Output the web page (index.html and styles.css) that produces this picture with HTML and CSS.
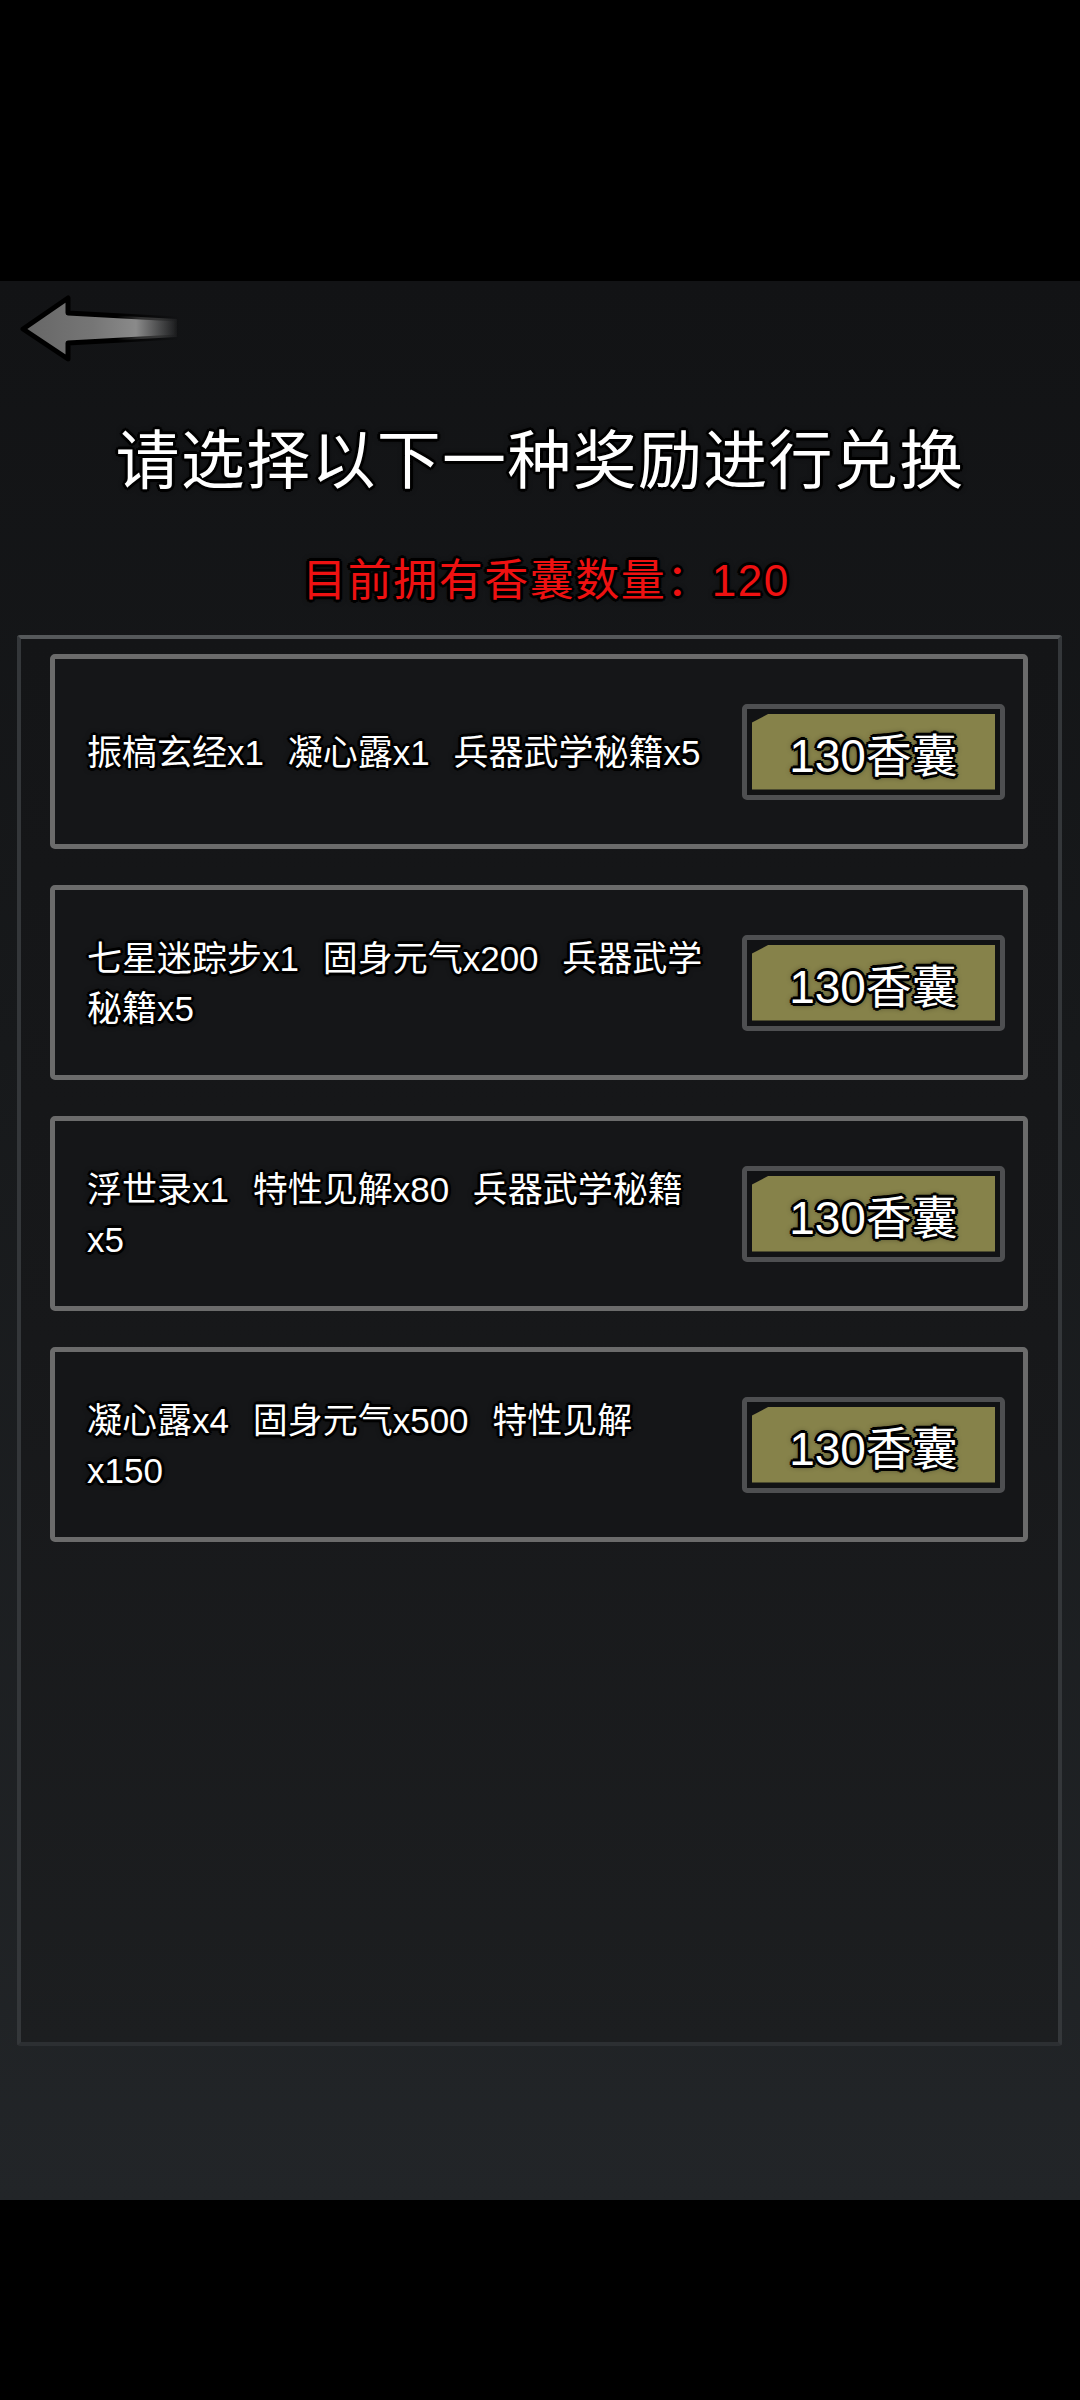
FILE: index.html
```html
<!DOCTYPE html>
<html lang="zh-CN">
<head>
  <meta charset="UTF-8">
  <meta name="viewport" content="width=device-width, initial-scale=1">
  <title>香囊兑换</title>
  <link rel="stylesheet" href="styles.css">
</head>
<body>

  <div class="status-bar"></div>

  <main class="screen">
    <div class="top">
      <button class="back" aria-label="返回">
        <svg width="180" height="90" viewBox="0 0 180 90">
          <defs>
            <linearGradient id="arrowFill" gradientUnits="userSpaceOnUse" x1="13" y1="0" x2="170" y2="0">
              <stop offset="0" stop-color="#666666"/>
              <stop offset="0.45" stop-color="#767676"/>
              <stop offset="0.72" stop-color="#8a8a8a"/>
              <stop offset="1" stop-color="#8a8a8a" stop-opacity="0"/>
            </linearGradient>
            <linearGradient id="arrowEdge" gradientUnits="userSpaceOnUse" x1="13" y1="0" x2="170" y2="0">
              <stop offset="0" stop-color="#000"/>
              <stop offset="0.6" stop-color="#000"/>
              <stop offset="1" stop-color="#000" stop-opacity="0"/>
            </linearGradient>
          </defs>
          <path d="M13 44 L58 13 L58 28 L167 34 L167 52 L58 58 L58 74 Z"
                fill="url(#arrowFill)" stroke="url(#arrowEdge)" stroke-width="5" stroke-linejoin="round"/>
        </svg>
      </button>
    </div>

    <h1 class="title">请选择以下一种奖励进行兑换</h1>
    <p class="owned">目前拥有香囊数量：120</p>

    <section class="panel">
      <div class="reward">
        <p class="reward-text">振槁玄经x1 凝心露x1 兵器武学秘籍x5</p>
        <button class="redeem"><span class="redeem-face">130香囊</span></button>
      </div>
      <div class="reward">
        <p class="reward-text">七星迷踪步x1 固身元气x200 兵器武学<br>秘籍x5</p>
        <button class="redeem"><span class="redeem-face">130香囊</span></button>
      </div>
      <div class="reward">
        <p class="reward-text">浮世录x1 特性见解x80 兵器武学秘籍<br>x5</p>
        <button class="redeem"><span class="redeem-face">130香囊</span></button>
      </div>
      <div class="reward">
        <p class="reward-text">凝心露x4 固身元气x500 特性见解<br>x150</p>
        <button class="redeem"><span class="redeem-face">130香囊</span></button>
      </div>
    </section>
  </main>

  <div class="nav-bar"></div>

</body>
</html>
```

FILE: styles.css
```css
* {
  box-sizing: border-box;
}

body {
  margin: 0;
  width: 1080px;
  height: 2400px;
  background: #000;
  color: #fff;
  font-family: "Liberation Sans", "Noto Sans CJK SC", sans-serif;
  overflow: hidden;
}

.status-bar {
  height: 281px;
  background: #000;
}

.nav-bar {
  height: 200px;
  background: #000;
}

.screen {
  height: 1919px;
  display: flex;
  flex-direction: column;
  background: linear-gradient(180deg, #121315 0%, #17191b 40%, #222528 100%);
}

.top {
  height: 94px;
  padding: 4px 0 0 10px;
}

.back {
  display: block;
  padding: 0;
  border: none;
  background: none;
  cursor: pointer;
}

.back svg {
  display: block;
}

/* black outline round game text */
.title,
.owned,
.reward-text,
.redeem-face {
  text-shadow:
    -2px -2px 0 #000, 2px -2px 0 #000, -2px 2px 0 #000, 2px 2px 0 #000,
    0 -3px 0 #000, 0 3px 0 #000, -3px 0 0 #000, 3px 0 0 #000,
    0 0 6px #000;
}

.title {
  margin: 46px 0 0;
  height: 80px;
  line-height: 80px;
  font-size: 64px;
  font-weight: normal;
  text-align: center;
  letter-spacing: 1.3px;
}

.owned {
  margin: 50px 0 0;
  padding-left: 12px;
  height: 60px;
  line-height: 60px;
  font-size: 44px;
  color: #ee1111;
  text-align: center;
  letter-spacing: 1.5px;
}

.panel {
  margin: 24px 18px 0 17px;
  height: 1411px;
  padding: 15px 30px 0 29px;
  display: flex;
  flex-direction: column;
  gap: 36px;
  border: 4px solid;
  border-color: #55585a #34373a #2c2f32 #34373a;
  border-radius: 3px;
  background: linear-gradient(180deg, #141517 0%, #17181a 50%, #1c1e20 100%);
}

.reward {
  height: 195px;
  display: flex;
  align-items: center;
  justify-content: space-between;
  padding: 0 18px 0 32px;
  border: 5px solid #6b6b6b;
  border-radius: 5px;
  background: #151618;
}

.reward-text {
  margin: 0;
  padding-top: 3px;
  font-size: 35px;
  line-height: 50px;
  white-space: nowrap;
  word-spacing: 14px;
}

.redeem {
  width: 263px;
  height: 96px;
  padding: 5px;
  border: 5px solid #4e4f51;
  border-radius: 5px;
  background: #111214;
  font-family: inherit;
  cursor: pointer;
}

.redeem-face {
  display: flex;
  align-items: center;
  justify-content: center;
  height: 100%;
  background: #86824a;
  clip-path: polygon(17px 0, 100% 0, 100% 100%, 0 100%, 0 9px);
  color: #fff;
  font-size: 46px;
}
```
